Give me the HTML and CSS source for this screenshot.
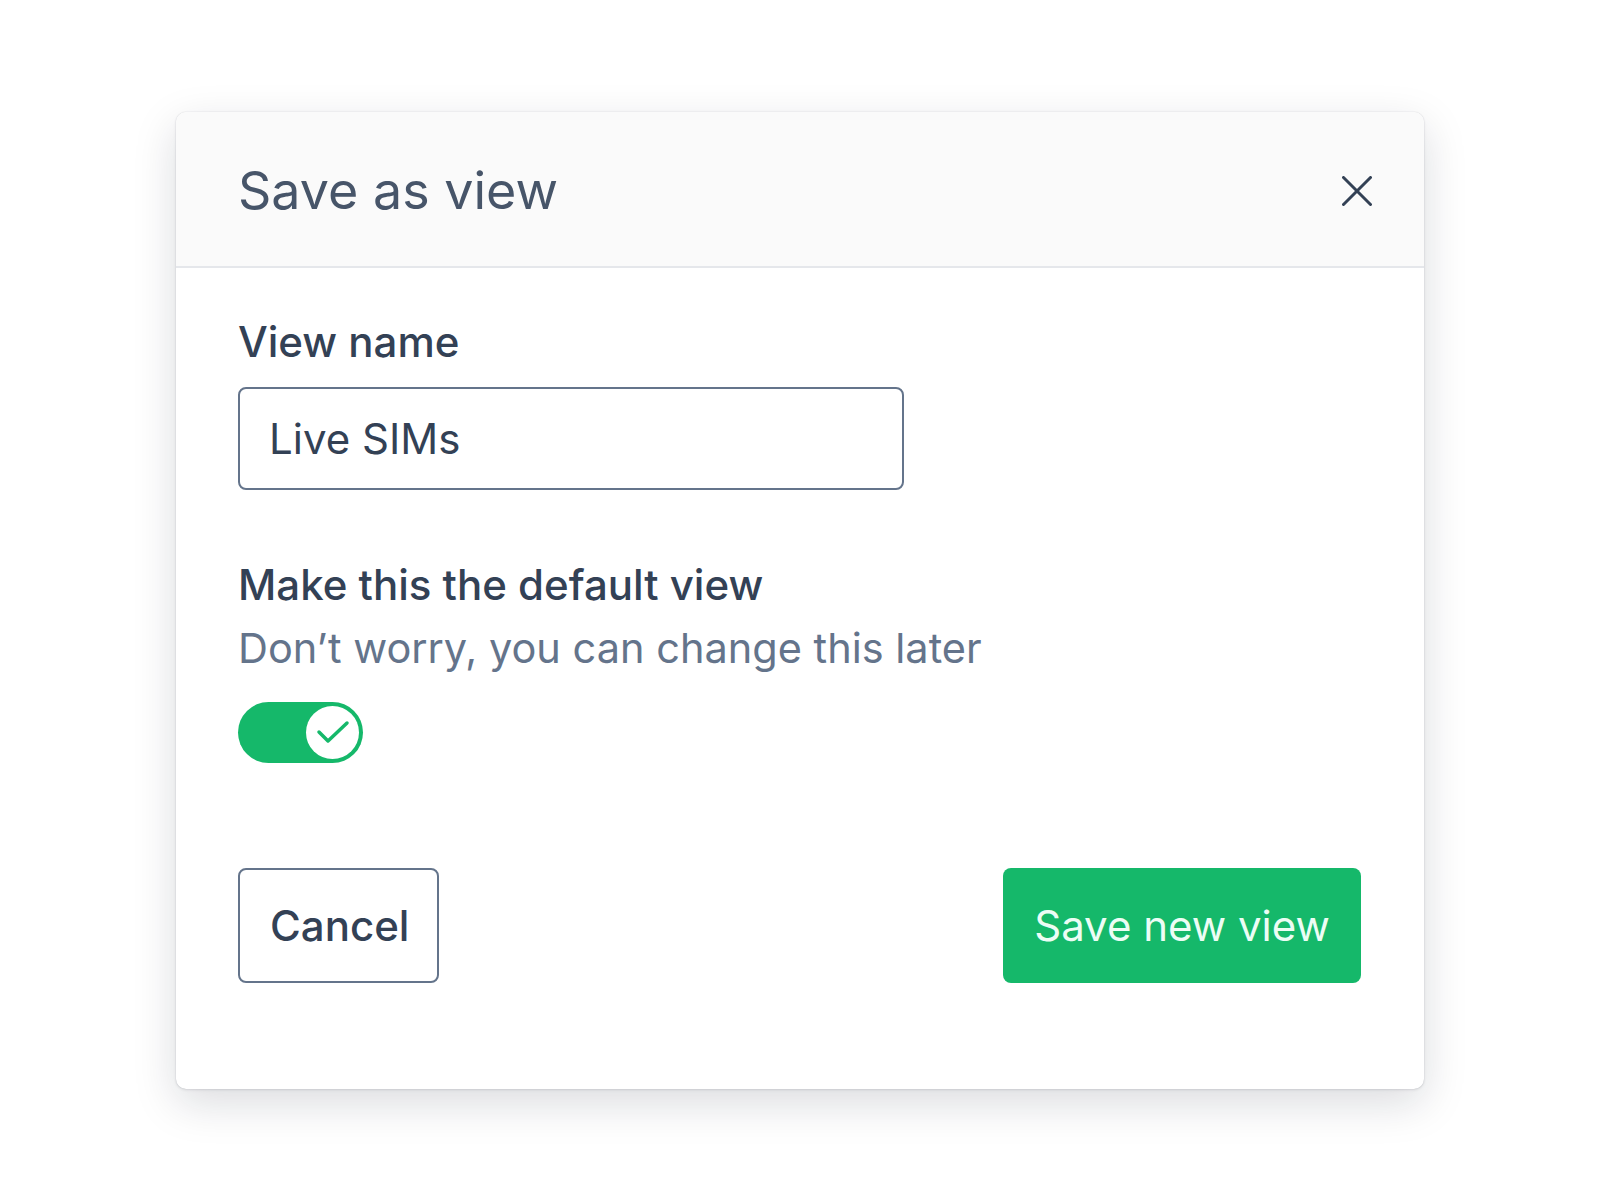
FILE: index.html
```html
<!DOCTYPE html>
<html lang="en">
<head>
<meta charset="utf-8">
<title>Save as view</title>
<link rel="stylesheet" href="styles.css">
</head>
<body>
<div class="page">
  <div class="modal">
    <div class="modal-header">
      <h1 class="modal-title">Save as view</h1>
      <button class="close-btn" aria-label="Close">
        <svg width="30" height="30" viewBox="0 0 30 30" fill="none" stroke="#334155" stroke-width="3" stroke-linecap="round">
          <line x1="1.5" y1="1.5" x2="28.5" y2="28.5"/>
          <line x1="28.5" y1="1.5" x2="1.5" y2="28.5"/>
        </svg>
      </button>
    </div>
    <div class="modal-body">
      <label class="field-label" for="viewname">View name</label>
      <input id="viewname" class="text-input" type="text" value="Live SIMs">
      <div class="default-title">Make this the default view</div>
      <div class="default-hint">Don’t worry, you can change this later</div>
      <div class="toggle">
        <div class="toggle-knob">
          <svg width="34" height="26" viewBox="0 0 34 26" fill="none" stroke="#15b86a" stroke-width="3.5" stroke-linecap="round" stroke-linejoin="round">
            <polyline points="3,12 12,21 31,3"/>
          </svg>
        </div>
      </div>
      <div class="actions">
        <button class="btn btn-secondary">Cancel</button>
        <button class="btn btn-primary">Save new view</button>
      </div>
    </div>
  </div>
</div>
</body>
</html>
```

FILE: styles.css
```css
* { box-sizing: border-box; }

html, body {
  margin: 0;
  padding: 0;
  background: #ffffff;
  font-family: Inter, "Noto Sans", "Liberation Sans", sans-serif;
}

.page {
  min-height: 1200px;
  padding: 112px 0 0 176px;
}

.modal {
  width: 1248px;
  background: #ffffff;
  border-radius: 10px;
  box-shadow:
    0 0 1px rgba(15, 23, 42, 0.25),
    0 1px 3px rgba(15, 23, 42, 0.10),
    0 14px 44px rgba(15, 23, 42, 0.15);
  overflow: hidden;
}

.modal-header {
  display: flex;
  align-items: center;
  justify-content: space-between;
  height: 156px;
  padding: 4px 52px 0 62px;
  background: #fafafa;
  border-bottom: 2px solid #e5e7eb;
}

.modal-title {
  margin: 0;
  font-size: 52px;
  font-weight: 400;
  color: #475569;
  line-height: 64px;
}

.close-btn {
  background: none;
  border: 0;
  padding: 0;
  width: 30px;
  height: 30px;
  display: flex;
}

.modal-body {
  padding: 48px 63px 106px 62px;
  display: flex;
  flex-direction: column;
}

.field-label {
  font-size: 42px;
  font-weight: 500;
  color: #334155;
  line-height: 52px;
}

.text-input {
  margin-top: 19px;
  width: 666px;
  height: 103px;
  border: 2px solid #64748b;
  border-radius: 8px;
  padding: 0 29px;
  font-family: inherit;
  font-size: 42px;
  color: #334155;
  background: #fff;
  outline: none;
}

.default-title {
  margin-top: 69px;
  font-size: 42px;
  font-weight: 500;
  color: #334155;
  line-height: 52px;
}

.default-hint {
  margin-top: 11px;
  font-size: 41.5px;
  font-weight: 400;
  color: #64748b;
  line-height: 52px;
}

.toggle {
  margin-top: 28px;
  width: 125px;
  height: 61px;
  border-radius: 31px;
  background: #15b86a;
  display: flex;
  align-items: center;
  justify-content: flex-end;
  padding-right: 4px;
}

.toggle-knob {
  width: 53px;
  height: 53px;
  border-radius: 50%;
  background: #ffffff;
  display: flex;
  align-items: center;
  justify-content: center;
}

.actions {
  margin-top: 105px;
  display: flex;
  justify-content: space-between;
  align-items: center;
}

.btn {
  height: 115px;
  border-radius: 8px;
  font-family: inherit;
  font-size: 42px;
  line-height: 52px;
  padding: 0 30px;
  white-space: nowrap;
  cursor: pointer;
}

.btn-secondary {
  width: 201px;
  background: #ffffff;
  border: 2px solid #64748b;
  color: #334155;
  font-weight: 500;
}

.btn-primary {
  width: 358px;
  background: #15b86a;
  border: 0;
  color: #ecfdf5;
  font-weight: 400;
}
```
